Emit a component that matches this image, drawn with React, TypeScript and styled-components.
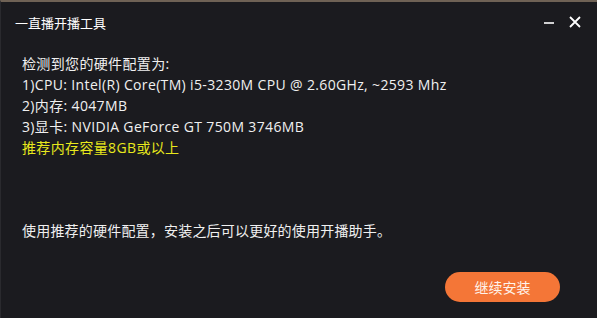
import React from "react";
import styled, { createGlobalStyle } from "styled-components";

const GlobalStyle = createGlobalStyle`
  html, body {
    margin: 0;
    padding: 0;
    background: #1b1b1f;
  }
  body {
    font-family: "Noto Sans", "Noto Sans CJK SC", sans-serif;
  }
`;

const Window = styled.div`
  width: 597px;
  height: 318px;
  box-sizing: border-box;
  background: #1b1b1f;
  border-top: 2px solid #6f6255;
  border-left: 1px solid #2a2a2e;
  display: flex;
  flex-direction: column;
  color: #f2f2f2;
  overflow: hidden;
`;

const TitleBar = styled.div`
  height: 40px;
  display: flex;
  align-items: center;
  padding: 0 10px 0 14px;
`;

const Title = styled.div`
  flex: 1;
  font-size: 13px;
  color: #ffffff;
  font-family: "Noto Sans CJK SC", sans-serif;
`;

const WinButton = styled.button`
  width: 24px;
  height: 24px;
  margin-left: 2px;
  padding: 0;
  border: none;
  background: transparent;
  display: flex;
  align-items: center;
  justify-content: center;
  cursor: pointer;
`;

const Body = styled.div`
  flex: 1;
  display: flex;
  flex-direction: column;
  padding: 11px 21px 0 21px;
`;

const Line = styled.div<{ $accent?: boolean }>`
  font-size: 14px;
  letter-spacing: 0.35px;
  line-height: 21px;
  color: ${({ $accent }) => ($accent ? "#e8e81c" : "#f0f0f0")};
  font-family: "Open Sans", "Noto Sans CJK SC", sans-serif;
  white-space: nowrap;
`;

const Note = styled(Line)`
  margin-top: 62px;
  letter-spacing: 0.2px;
`;

const Footer = styled.div`
  display: flex;
  justify-content: flex-end;
  padding: 0 37px 16px 0;
  margin-top: auto;
`;

const PrimaryButton = styled.button`
  width: 115px;
  height: 30px;
  border: none;
  border-radius: 15px;
  background: #f47637;
  color: #fff3ea;
  font-size: 14px;
  font-family: "Noto Sans CJK SC", sans-serif;
  cursor: pointer;
`;

export default function App(): React.ReactElement {
  return (
    <>
      <GlobalStyle />
      <Window>
        <TitleBar>
          <Title>一直播开播工具</Title>
          <WinButton aria-label="minimize">
            <svg width="12" height="12" viewBox="0 0 12 12">
              <line x1="1" y1="7" x2="11" y2="7" stroke="#fff" strokeWidth="1.6" />
            </svg>
          </WinButton>
          <WinButton aria-label="close">
            <svg width="12" height="12" viewBox="0 0 12 12">
              <path d="M1 1 L11 11 M11 1 L1 11" stroke="#fff" strokeWidth="1.8" />
            </svg>
          </WinButton>
        </TitleBar>
        <Body>
          <Line>检测到您的硬件配置为:</Line>
          <Line>1)CPU: Intel(R) Core(TM) i5-3230M CPU @ 2.60GHz, ~2593 Mhz</Line>
          <Line>2)内存: 4047MB</Line>
          <Line>3)显卡: NVIDIA GeForce GT 750M 3746MB</Line>
          <Line $accent>推荐内存容量8GB或以上</Line>
          <Note>使用推荐的硬件配置，安装之后可以更好的使用开播助手。</Note>
        </Body>
        <Footer>
          <PrimaryButton>继续安装</PrimaryButton>
        </Footer>
      </Window>
    </>
  );
}
